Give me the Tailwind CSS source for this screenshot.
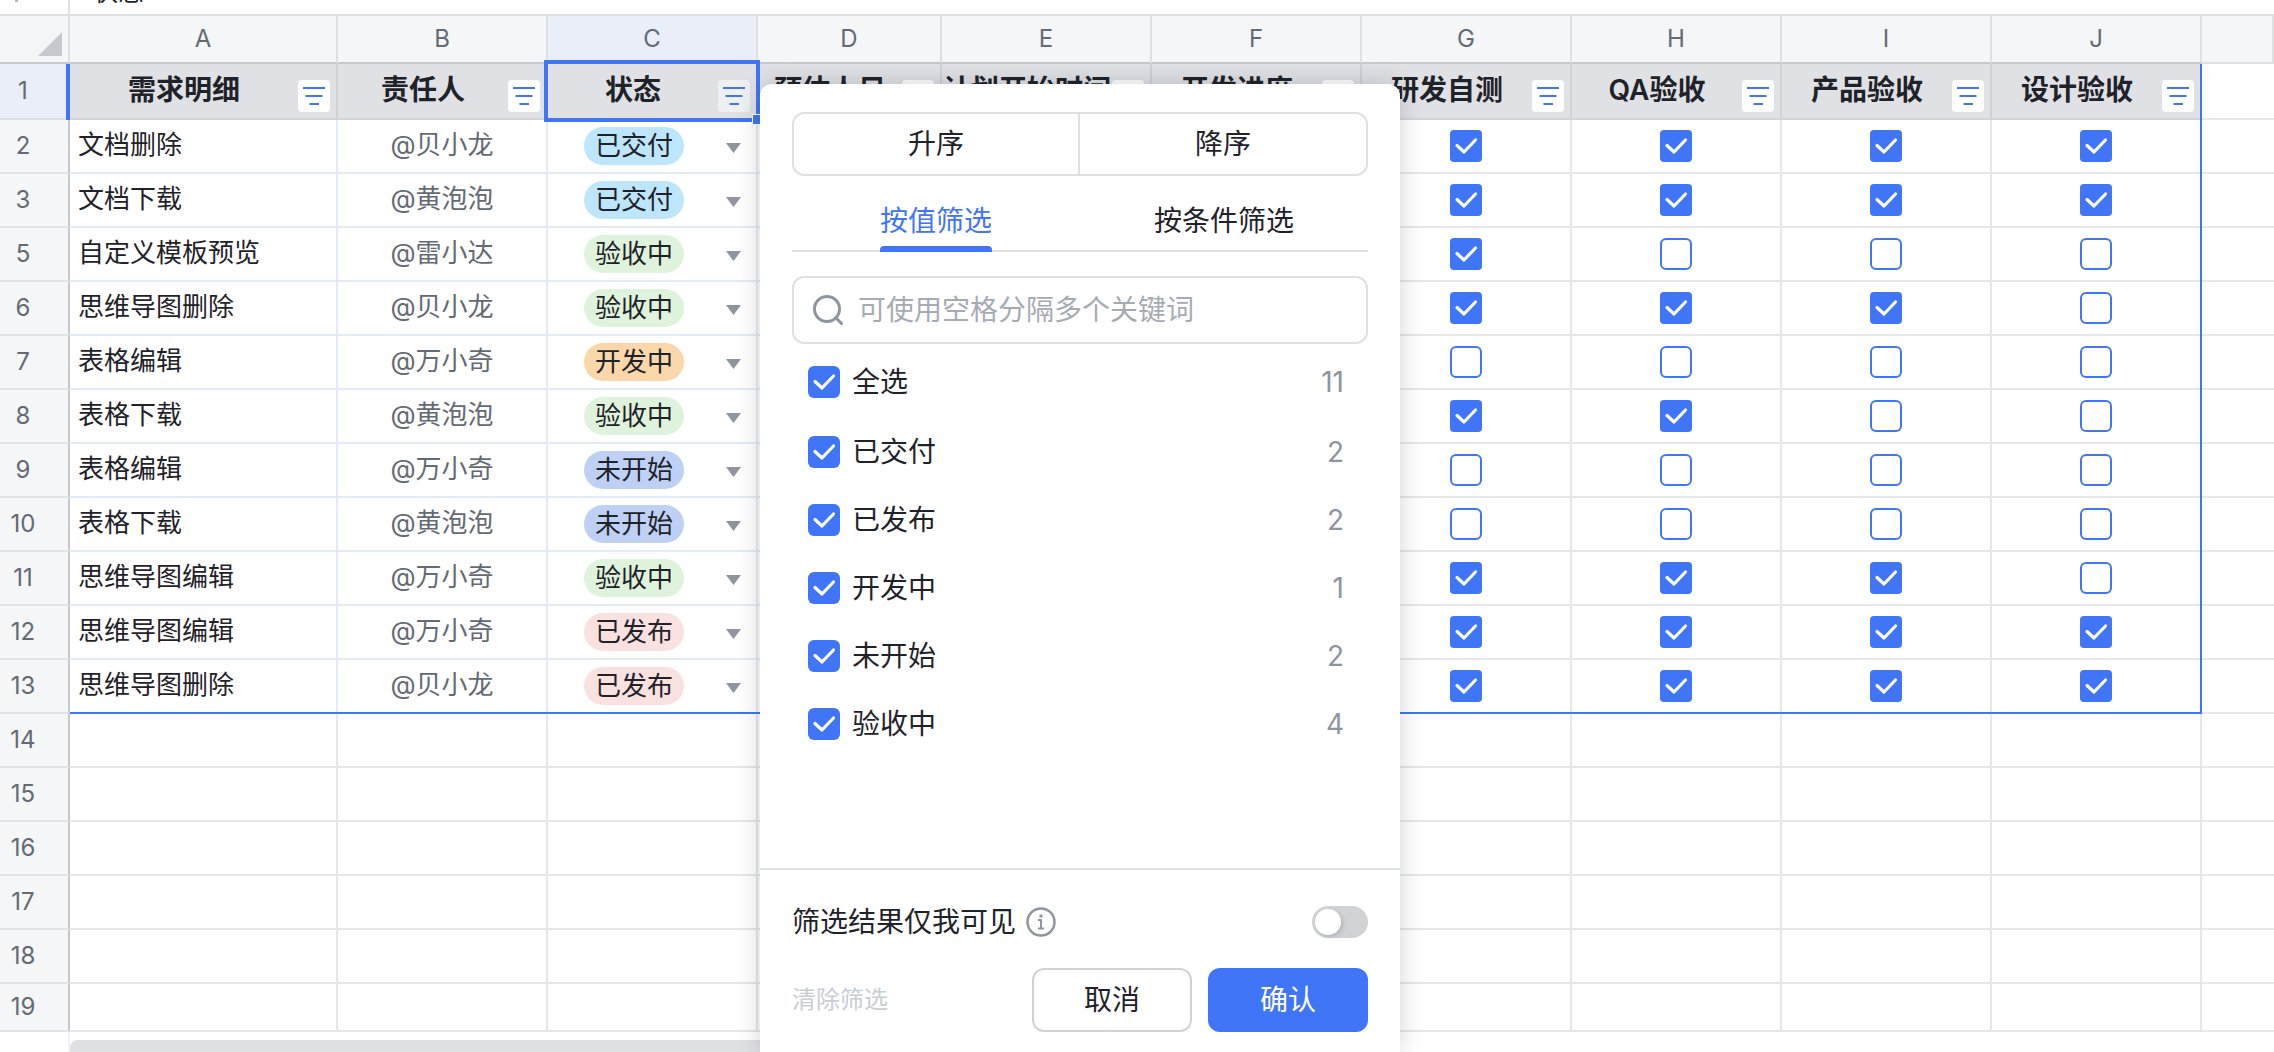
<!DOCTYPE html>
<html lang="zh">
<head>
<meta charset="utf-8" />
<title>筛选</title>
<script src="https://cdn.jsdelivr.net/npm/@tailwindcss/browser@4"></script>
</head>
<body class="bg-white">
<div class="relative w-[2274px] h-[1052px] overflow-hidden bg-white text-[#1f2329] font-['Inter','Noto_Sans_CJK_SC',sans-serif]">

  <!-- formula bar, cut off at the top -->
  <div class="flex h-[16px] border-b-2 border-[#dee0e3] overflow-hidden">
    <div class="relative w-[70px] border-r-2 border-[#dee0e3]">
      <span class="absolute left-[15px] top-0 w-[3px] h-[2px] bg-[#b5b8be]"></span>
    </div>
    <div class="pl-[22px] -mt-[22px] text-[26px] leading-[28px]">状态</div>
  </div>

  <div id="sheet"></div>

  <!-- scrollbar -->
  <div class="flex h-[20px]">
    <div class="w-[70px] border-r-2 border-[#f1f1f2]"></div>
    <div class="mt-[8px] w-[820px] h-[12px] rounded-t-[8px] bg-[#dee0e3]"></div>
  </div>

  <!-- selection overlays -->
  <div class="absolute left-[66px] top-[64px] w-[4px] h-[56px] bg-[#3f75f6]"></div>
  <div class="absolute left-[70px] top-[712px] w-[2132px] h-[2px] bg-[#3f75f6]"></div>
  <div class="absolute left-[2200px] top-[64px] w-[2px] h-[650px] bg-[#3f75f6]"></div>
  <div class="absolute left-[544px] top-[60px] w-[216px] h-[62px] border-4 border-[#3f75f6]"></div>
  <div class="absolute left-[752px] top-[114px] w-[10px] h-[11px] bg-[#3f75f6] border border-white"></div>

  <!-- filter popover -->
  <div class="absolute left-[760px] top-[84px] w-[640px] h-[968px] flex flex-col bg-white rounded-t-[12px] shadow-[0_0_24px_rgba(31,35,41,0.2)]">
    <div class="px-[32px] pt-[28px]">
      <div class="grid grid-cols-2 h-[64px] border-2 border-[#dee0e3] rounded-[12px] text-[28px]">
        <div class="flex items-center justify-center border-r-2 border-[#dee0e3]">升序</div>
        <div class="flex items-center justify-center">降序</div>
      </div>

      <div class="grid grid-cols-2 h-[76px] border-b-2 border-[#dee0e3] text-[28px]">
        <div class="relative flex items-center justify-center pt-[16px] text-[#3f75f6]">
          按值筛选
          <span class="absolute left-[88px] -bottom-[2px] w-[112px] h-[6px] rounded-t-[4px] bg-[#3f75f6]"></span>
        </div>
        <div class="flex items-center justify-center pt-[16px]">按条件筛选</div>
      </div>

      <div class="flex items-center gap-[14px] h-[68px] mt-[24px] pl-[18px] border-2 border-[#dee0e3] rounded-[12px] text-[28px] text-[#a6abb3]">
        <svg class="w-[32px] h-[32px]" viewBox="0 0 32 32" fill="none" stroke="#8f959e" stroke-width="3" stroke-linecap="round"><circle cx="15" cy="15" r="12.5"/><path d="M24 24l5.5 5.5"/></svg>
        <span>可使用空格分隔多个关键词</span>
      </div>

      <div id="values" class="flex flex-col mt-[4px]"></div>
    </div>

    <div class="mt-auto border-t-2 border-[#e2e3e7] px-[32px] pt-[36px] pb-[20px]">
      <div class="flex items-center h-[32px]">
        <span class="text-[28px]">筛选结果仅我可见</span>
        <svg class="ml-[10px] w-[30px] h-[30px]" viewBox="0 0 30 30" fill="none"><circle cx="15" cy="15" r="13.5" stroke="#8f959e" stroke-width="2.5"/><rect x="13.5" y="7.5" width="3" height="3" fill="#8f959e"/><path d="M12 13h3v8M12 21.5h6" stroke="#8f959e" stroke-width="2"/></svg>
        <div class="ml-auto flex items-center w-[56px] h-[32px] pl-[3px] rounded-full bg-[#d0d3d6]">
          <span class="w-[26px] h-[26px] rounded-full bg-white shadow-[2px_2px_4px_rgba(0,0,0,0.15)]"></span>
        </div>
      </div>
      <div class="flex items-center mt-[30px] gap-[16px]">
        <span class="mr-auto text-[24px] text-[#c9cdd4]">清除筛选</span>
        <div class="flex items-center justify-center w-[160px] h-[64px] border-2 border-[#d0d3d6] rounded-[12px] text-[28px]">取消</div>
        <div class="flex items-center justify-center w-[160px] h-[64px] rounded-[12px] bg-[#3f75f6] text-white text-[28px]">确认</div>
      </div>
    </div>
  </div>
</div>

<script>
const gridCols = 'grid grid-cols-[70px_268px_210px_210px_184px_210px_210px_210px_210px_210px_210px_72px]'

const filterIcon = `<svg class="w-[32px] h-[32px]" viewBox="0 0 32 32"><rect x="5" y="7" width="22" height="2" fill="#3f75f6"/><rect x="7.5" y="15" width="17" height="2" fill="#3f75f6"/><rect x="11.5" y="23" width="9.5" height="2" fill="#3f75f6"/></svg>`
const checkMark = `<svg class="w-[32px] h-[32px]" viewBox="0 0 32 32" fill="none"><path d="M7 15.5l7 6.5 11.5-12" stroke="#fff" stroke-width="3.2" stroke-linecap="round" stroke-linejoin="round"/></svg>`

const tagColors = {
  '已交付': 'bg-[#bde6fb]',
  '验收中': 'bg-[#dff3dc]',
  '开发中': 'bg-[#fad7ab]',
  '未开始': 'bg-[#bfd0f5]',
  '已发布': 'bg-[#f9e1e0]',
}

const rows = [
  ['2', '文档删除', '@贝小龙', '已交付', '1111'],
  ['3', '文档下载', '@黄泡泡', '已交付', '1111'],
  ['5', '自定义模板预览', '@雷小达', '验收中', '1000'],
  ['6', '思维导图删除', '@贝小龙', '验收中', '1110'],
  ['7', '表格编辑', '@万小奇', '开发中', '0000'],
  ['8', '表格下载', '@黄泡泡', '验收中', '1100'],
  ['9', '表格编辑', '@万小奇', '未开始', '0000'],
  ['10', '表格下载', '@黄泡泡', '未开始', '0000'],
  ['11', '思维导图编辑', '@万小奇', '验收中', '1110'],
  ['12', '思维导图编辑', '@万小奇', '已发布', '1111'],
  ['13', '思维导图删除', '@贝小龙', '已发布', '1111'],
]

const letters = ['', 'A', 'B', 'C', 'D', 'E', 'F', 'G', 'H', 'I', 'J', '']
const titles = ['需求明细', '责任人', '状态', '预估人日', '计划开始时间', '开发进度', '研发自测', 'QA验收', '产品验收', '设计验收']

let html = ''

// column letters
html += `<div class="${gridCols} h-[48px]">`
letters.forEach((l, i) => {
  if (i === 0) {
    html += `<div class="relative bg-[#f5f6f7] border-r-2 border-b-2 border-r-[#dee0e3] border-b-[#c6c8cd]"><svg class="absolute left-[38px] top-[16px] w-[24px] h-[24px]" viewBox="0 0 24 24"><path d="M24 0v24H0z" fill="#c6c8cd"/></svg></div>`
  } else {
    const bg = l === 'C' ? 'bg-[#e9eef8]' : 'bg-[#f5f6f7]'
    const line = i === 11 ? 'border-b-[#dee0e3]' : 'border-b-[#c6c8cd]'
    html += `<div class="flex items-center justify-center ${bg} border-r-2 border-b-2 border-r-[#dee0e3] ${line} text-[24px] text-[#646a73]">${l}</div>`
  }
})
html += '</div>'

// row 1, the frozen titles
html += `<div class="${gridCols} h-[56px]">`
html += `<div class="flex items-center justify-center pr-[22px] bg-[#e9eef8] border-r-2 border-b-2 border-[#dee0e3] text-[24px] text-[#646a73]">1</div>`
titles.forEach((t, i) => {
  const btn = i === 2 ? 'bg-[#eef0f3]' : 'bg-white'
  html += `<div class="flex items-center justify-between pr-[6px] bg-[#dfe1e5] border-r-2 border-b-2 border-r-[#cfd1d6] border-b-[#d3d5d9]"><span class="flex-1 text-center text-[28px] font-semibold leading-none -mt-[2px]">${t}</span><span class="shrink-0 mt-[10px] w-[32px] h-[32px] rounded-[4px] ${btn}">${filterIcon}</span></div>`
})
html += `<div class="border-b-2 border-[#e8e8e8]"></div></div>`

const blueCell = 'border-r-2 border-b-2 border-[#e2ebf7]'
const grayCell = 'border-r-2 border-b-2 border-[#e6e7e8]'

rows.forEach(r => {
  html += `<div class="${gridCols} h-[54px]">`
  html += `<div class="flex items-center justify-center pr-[22px] bg-[#f5f6f7] border-r-2 border-b-2 border-r-[#c6c8cd] border-b-[#e3e4e7] text-[24px] text-[#646a73]">${r[0]}</div>`
  html += `<div class="flex items-center pl-[8px] pb-[3px] ${blueCell} text-[26px]">${r[1]}</div>`
  html += `<div class="flex items-center justify-center pb-[3px] ${blueCell} text-[26px] text-[#646a73]">${r[2]}</div>`
  html += `<div class="relative flex items-center ${blueCell}"><span class="ml-[36px] w-[100px] h-[38px] flex items-center justify-center pb-[2px] rounded-full ${tagColors[r[3]]} text-[26px]">${r[3]}</span><svg class="absolute left-[178px] top-[23px] w-[15px] h-[10px]" viewBox="0 0 15 10"><path d="M0 0h15l-7.5 10z" fill="#8f959e"/></svg></div>`
  html += `<div class="${blueCell}"></div><div class="${grayCell}"></div><div class="${grayCell}"></div>`
  r[4].split('').forEach(v => {
    const box = v === '1'
      ? `<span class="w-[32px] h-[32px] rounded-[4px] bg-[#3f75f6]">${checkMark}</span>`
      : `<span class="w-[32px] h-[32px] rounded-[6px] border-2 border-[#3f75f6] bg-white"></span>`
    html += `<div class="flex items-center justify-center ${grayCell}">${box}</div>`
  })
  html += `<div class="border-b-2 border-[#e8e8e8]"></div></div>`
})

// empty rows
;['14', '15', '16', '17', '18', '19'].forEach(n => {
  const h = n === '19' ? 'h-[48px]' : 'h-[54px]'
  html += `<div class="${gridCols} ${h}">`
  html += `<div class="flex items-center justify-center pr-[22px] bg-[#f5f6f7] border-r-2 border-b-2 border-r-[#c6c8cd] border-b-[#e3e4e7] text-[24px] text-[#646a73]">${n}</div>`
  for (let i = 0; i < 10; i++) html += `<div class="${grayCell}"></div>`
  html += `<div class="border-b-2 border-[#e8e8e8]"></div></div>`
})

document.getElementById('sheet').innerHTML = html

const values = [['全选', '11'], ['已交付', '2'], ['已发布', '2'], ['开发中', '1'], ['未开始', '2'], ['验收中', '4']]
document.getElementById('values').innerHTML = values.map((v, i) => `
  <div class="flex items-center h-[68px] pl-[16px] pr-[24px] ${i === 0 ? 'mb-[2px]' : ''}">
    <span class="w-[32px] h-[32px] rounded-[6px] bg-[#3f75f6]">${checkMark}</span>
    <span class="ml-[12px] text-[28px]">${v[0]}</span>
    <span class="ml-auto text-[28px] text-[#8f959e]">${v[1]}</span>
  </div>`).join('')
</script>
</body>
</html>
